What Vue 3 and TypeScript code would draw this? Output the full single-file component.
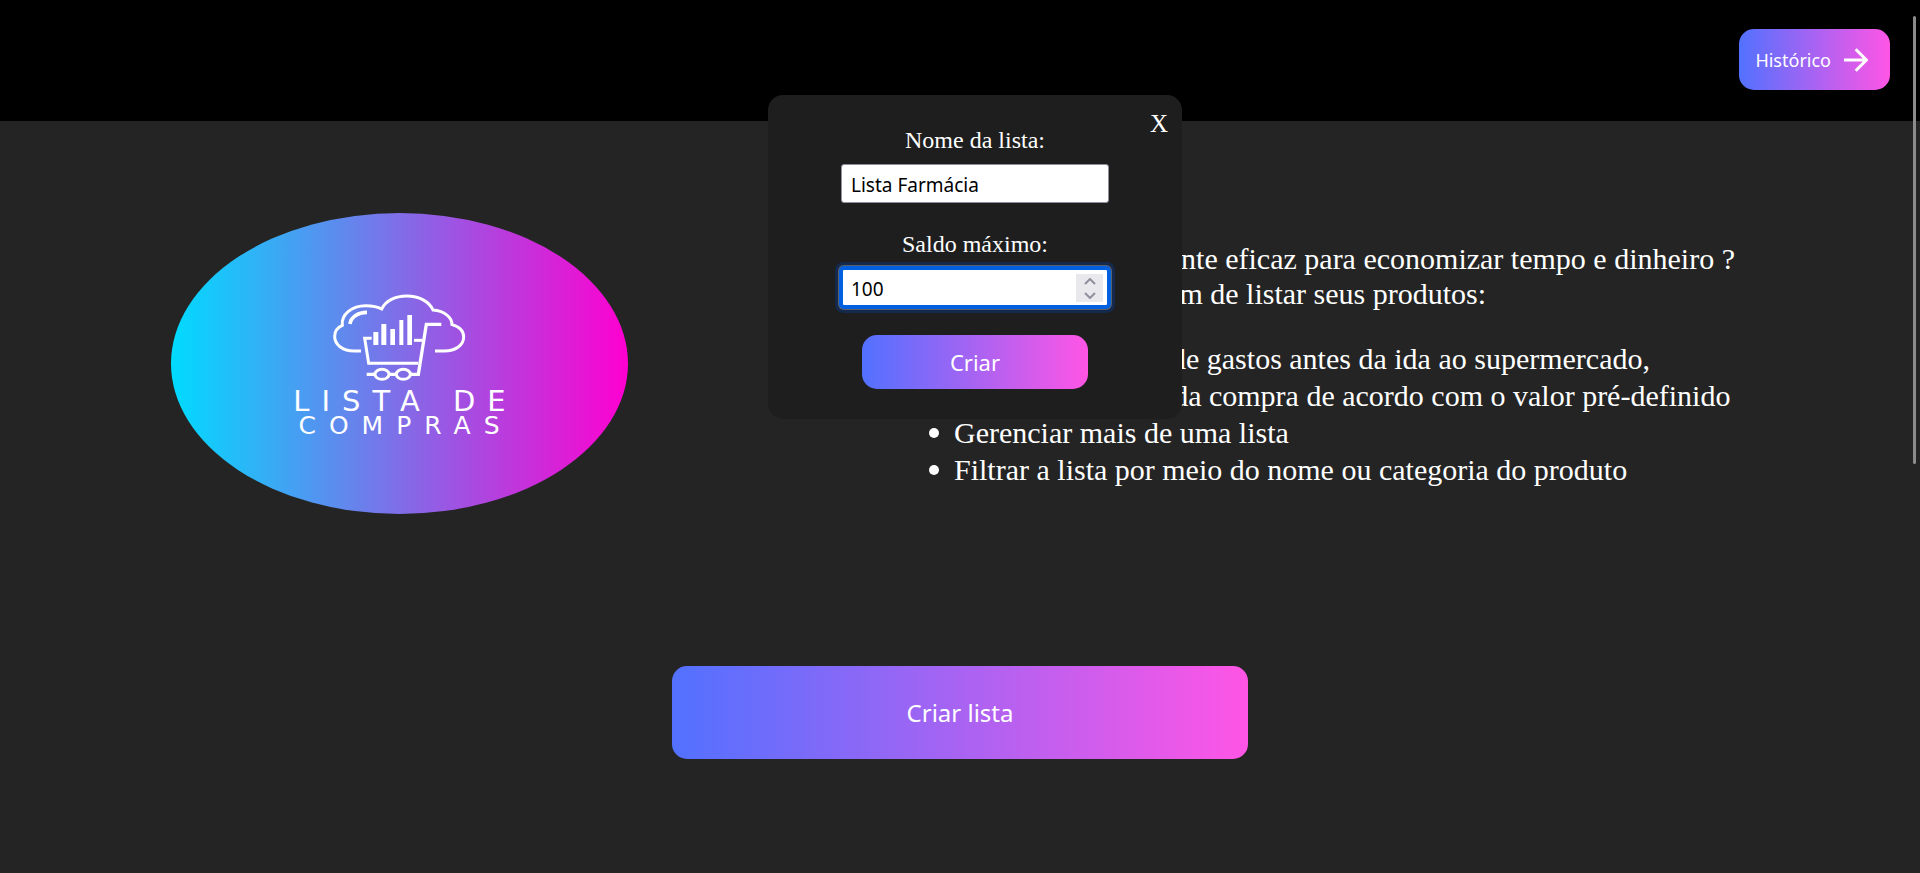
<script setup lang="ts">
import { ref } from 'vue'

const listName = ref<string>('Lista Farmácia')
const maxBalance = ref<number>(100)
const modalOpen = ref<boolean>(true)

const features: string[] = [
  'Ter mais controle de gastos antes da ida ao supermercado,',
  'Controle do valor da compra de acordo com o valor pré-definido',
  'Gerenciar mais de uma lista',
  'Filtrar a lista por meio do nome ou categoria do produto',
]

function step(amount: number): void {
  maxBalance.value = Math.max(0, Number(maxBalance.value) + amount)
}
</script>

<template>
  <div class="page">
    <header class="topbar">
      <button type="button" class="btn history">
        Histórico
        <svg class="arrow" viewBox="0 0 24 24" aria-hidden="true">
          <path d="M0 12H22M11.7 1.2L22.4 12L11.7 22.8" />
        </svg>
      </button>
    </header>

    <main>
      <section class="hero">
        <div class="brand">
          <div class="logo">
            <svg class="logo-icon" viewBox="152 36 414 270" aria-hidden="true">
              <g fill="none" stroke="#fff" stroke-width="9">
                <path d="M242 213H222C186 213 163 194 163 169C163 153 172 142 186 136C182 103 215 77 256 77C276 77 292 80 304 87C316 62 345 48 379 48C417 48 447 65 458 90C489 92 515 110 515 134C537 140 550 153 550 171C550 195 526 213 492 213H464" />
                <path d="M209 132C211 112 232 97 260 97" stroke-width="11" />
                <path d="M274 175H253L265 250H414" />
                <path d="M401 181H426" />
                <path d="M483 133H438L414 283H392M346 283H328M282 283H259" stroke-width="10" />
                <ellipse cx="305" cy="283" rx="21" ry="15" />
                <ellipse cx="369" cy="283" rx="21" ry="15" />
              </g>
              <g fill="#fff">
                <rect x="279" y="156" width="15" height="39" />
                <rect x="303" y="132" width="15" height="63" />
                <rect x="330" y="147" width="14" height="48" />
                <rect x="357" y="120" width="12" height="75" />
                <rect x="381" y="105" width="14" height="90" />
              </g>
            </svg>
            <span class="logo-top">LISTA DE</span>
            <span class="logo-bottom">COMPRAS</span>
          </div>
        </div>

        <div class="intro">
          <p>
            Busca um jeito realmente eficaz para economizar tempo e dinheiro ?<br />
            No app você pode, além de listar seus produtos:
          </p>
          <ul>
            <li v-for="feature in features" :key="feature">{{ feature }}</li>
          </ul>
        </div>
      </section>

      <div class="action">
        <button type="button" class="btn create" @click="modalOpen = true">Criar lista</button>
      </div>
    </main>

    <form v-if="modalOpen" class="modal" @submit.prevent="modalOpen = false">
      <button type="button" class="close" @click="modalOpen = false">X</button>
      <label for="list-name">Nome da lista:</label>
      <input id="list-name" v-model="listName" type="text" class="field" />
      <label for="max-balance">Saldo máximo:</label>
      <div class="number">
        <input id="max-balance" v-model="maxBalance" type="number" class="field active" />
        <div class="spinner">
          <button type="button" aria-label="Aumentar" @click="step(1)">
            <svg viewBox="0 0 12 7" aria-hidden="true"><path d="M1 6L6 1L11 6" /></svg>
          </button>
          <button type="button" aria-label="Diminuir" @click="step(-1)">
            <svg viewBox="0 0 12 7" aria-hidden="true"><path d="M1 1L6 6L11 1" /></svg>
          </button>
        </div>
      </div>
      <button type="submit" class="btn submit">Criar</button>
    </form>

    <div class="scroll-thumb"></div>
  </div>
</template>

<style>
body {
  margin: 0;
  background: #242424;
}
</style>

<style scoped>
.page {
  position: relative;
  min-height: 100vh;
  overflow: hidden;
  color: #fff;
  font-family: "Liberation Serif", "Times New Roman", serif;
}

.topbar {
  display: flex;
  justify-content: flex-end;
  padding: 29px 30px 31px;
  background: #000;
}

.btn {
  border: 0;
  border-radius: 15px;
  background: linear-gradient(90deg, #5271ff, #ff55e5);
  color: #fff;
  font-family: "Noto Sans", Tahoma, sans-serif;
  cursor: pointer;
}

.history {
  display: flex;
  align-items: center;
  gap: 13px;
  height: 61px;
  padding: 0 22px 0 16px;
  font-size: 18px;
}

.arrow {
  width: 24px;
  height: 24px;
  fill: none;
  stroke: #fff;
  stroke-width: 3;
}

.hero {
  display: grid;
  grid-template-columns: 5fr 7fr;
  padding-top: 92px;
}

.brand {
  display: flex;
  justify-content: center;
  align-items: flex-start;
  padding-right: 1px;
}

.logo {
  display: flex;
  flex-direction: column;
  align-items: center;
  box-sizing: border-box;
  width: 457px;
  height: 301px;
  padding-top: 79px;
  border-radius: 50%;
  background: linear-gradient(90deg, #00dbff, #ff00d0);
  font-family: "DejaVu Sans", sans-serif;
}

.logo-icon {
  width: 138px;
  height: 90px;
  margin-bottom: 6px;
}

.logo-top,
.logo-bottom {
  padding-left: 12px;
}

.logo-top {
  font-size: 29px;
  line-height: 26px;
  letter-spacing: 12px;
}

.logo-bottom {
  font-size: 25px;
  line-height: 24px;
  letter-spacing: 13px;
}

.intro {
  padding: 28px 0 0 112px;
  font-size: 30px;
  white-space: nowrap;
}

.intro p {
  margin: 0 0 29px;
  line-height: 35px;
}

.intro ul {
  margin: 0;
  padding-left: 17px;
  line-height: 37px;
  list-style: none;
}

.intro li {
  display: flex;
  align-items: center;
  gap: 15px;
}

.intro li::before {
  width: 10px;
  height: 10px;
  border-radius: 50%;
  background: #fff;
  content: "";
}

.action {
  display: flex;
  justify-content: center;
  padding-top: 152px;
}

.create {
  width: 30%;
  height: 93px;
  font-size: 24px;
}

.modal {
  position: absolute;
  top: 95px;
  left: 40%;
  display: flex;
  flex-direction: column;
  align-items: center;
  box-sizing: border-box;
  width: 414px;
  padding: 31px 73px 30px;
  border-radius: 15px;
  background: #1e1e1e;
}

.modal label {
  margin-bottom: 10px;
  font-size: 24px;
  line-height: 28px;
}

.close {
  position: absolute;
  top: 15px;
  right: 14px;
  padding: 0;
  border: 0;
  background: none;
  color: #fff;
  font-family: inherit;
  font-size: 25px;
  line-height: 28px;
  cursor: pointer;
}

.field {
  box-sizing: border-box;
  width: 100%;
  height: 39px;
  padding: 2px 9px 0;
  border: 1px solid #8f8f9d;
  border-radius: 3px;
  background: #fff;
  color: #000;
  font-family: "Noto Sans", Tahoma, sans-serif;
  font-size: 19px;
  appearance: textfield;
}

.field:focus {
  outline: none;
}

#list-name {
  margin-bottom: 27px;
}

.number {
  position: relative;
  width: 100%;
  margin-bottom: 28px;
}

.number .field {
  display: block;
  padding: 2px 8px 0;
}

.field.active {
  border: 2px solid #0060df;
  box-shadow: 0 0 0 2px #0060df, 0 0 0 3px #5c6068, 0 0 0 6px #15294c;
}

.field::-webkit-inner-spin-button {
  display: none;
}

.spinner {
  position: absolute;
  top: 6px;
  right: 6px;
  display: flex;
  flex-direction: column;
  width: 27px;
  height: 28px;
  background: #e9e9ed;
}

.spinner button {
  display: flex;
  flex: 1;
  align-items: center;
  justify-content: center;
  padding: 0;
  border: 0;
  background: none;
}

.spinner svg {
  width: 12px;
  height: 7px;
  fill: none;
  stroke: #8f8f9d;
  stroke-width: 2;
}

.submit {
  width: 226px;
  height: 54px;
  font-size: 22px;
}

.scroll-thumb {
  position: absolute;
  top: 16px;
  right: 4px;
  width: 3px;
  height: 448px;
  border-radius: 2px;
  background: #8b8b8b;
}
</style>
